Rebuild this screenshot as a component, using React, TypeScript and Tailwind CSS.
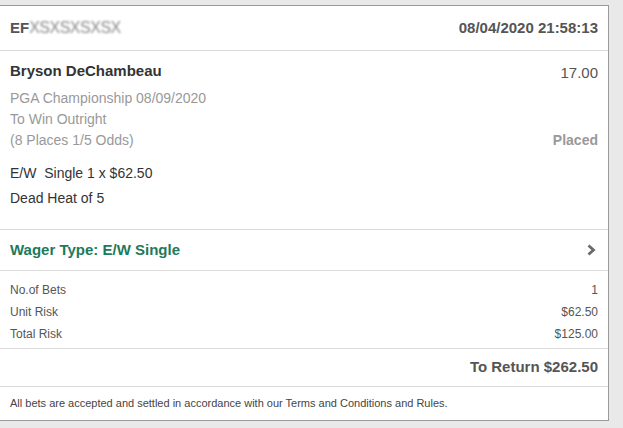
import React from "react";

const summary = [
  { label: "No.of Bets", value: "1" },
  { label: "Unit Risk", value: "$62.50" },
  { label: "Total Risk", value: "$125.00" },
];

export default function App() {
  return (
    <div
      className="w-[623px] h-[428px] bg-[#e9e9e9] pt-[5px] overflow-hidden"
      style={{ fontFamily: '"Liberation Sans", Arial, sans-serif' }}
    >
      <div className="w-[609px] h-[416px] bg-white border border-l-0 border-[#9a9a9a] flex flex-col">
        {/* Header */}
        <div className="h-[45px] flex items-center justify-between pl-[10px] pr-[10px] border-b border-[#dcdcdc]">
          <div className="flex items-center text-[15px] font-bold text-[#555]">
            <span>EF</span>
            <span className="text-[#8a8a8a] blur-[0.8px] text-[16px] tracking-[-0.5px] font-normal">
              XSXSXSXSX
            </span>
          </div>
          <span className="text-[15px] font-bold text-[#555]">08/04/2020 21:58:13</span>
        </div>

        {/* Selection */}
        <div className="h-[179px] flex justify-between pl-[10px] pr-[10px] pt-[10px] border-b border-[#dcdcdc]">
          <div className="flex flex-col">
            <span className="text-[15px] font-bold text-[#333] leading-[19px]">Bryson DeChambeau</span>
            <div className="mt-[8px] flex flex-col text-[14px] text-[#999] leading-[21px]">
              <span>PGA Championship 08/09/2020</span>
              <span>To Win Outright</span>
              <span>(8 Places 1/5 Odds)</span>
            </div>
            <div className="mt-[10px] flex flex-col text-[14px] text-[#333] leading-[25px]">
              <span>E/W&nbsp; Single 1 x $62.50</span>
              <span>Dead Heat of 5</span>
            </div>
          </div>
          <div className="flex flex-col items-end">
            <span className="text-[15px] text-[#555] leading-[19px] mt-[2px]">17.00</span>
            <span className="text-[14px] font-bold text-[#999] mt-[48px]">Placed</span>
          </div>
        </div>

        {/* Wager type */}
        <div className="h-[41px] flex items-center justify-between pl-[10px] pr-[10px] border-b border-[#dcdcdc]">
          <span className="text-[15px] font-bold text-[#1d7a5a]">Wager Type: E/W Single</span>
          <svg width="10" height="12" viewBox="0 0 10 12" className="mr-[2px]">
            <path d="M2.5 1.5 L7.5 6 L2.5 10.5" fill="none" stroke="#6a6a6a" strokeWidth="2.8" />
          </svg>
        </div>

        {/* Summary */}
        <div className="h-[78px] flex flex-col justify-center gap-[3px] pt-[6px] pl-[10px] pr-[10px] border-b border-[#dcdcdc]">
          {summary.map((row) => (
            <div key={row.label} className="flex justify-between text-[12px] text-[#555] leading-[19px]">
              <span>{row.label}</span>
              <span>{row.value}</span>
            </div>
          ))}
        </div>

        {/* Return */}
        <div className="h-[38px] flex items-center justify-end pr-[10px] border-b border-[#dcdcdc]">
          <span className="text-[15px] font-bold text-[#555]">To Return $262.50</span>
        </div>

        {/* Footer */}
        <div className="flex-1 flex items-center pl-[10px]">
          <span className="text-[11px] text-[#444]">
            All bets are accepted and settled in accordance with our Terms and Conditions and Rules.
          </span>
        </div>
      </div>
    </div>
  );
}
